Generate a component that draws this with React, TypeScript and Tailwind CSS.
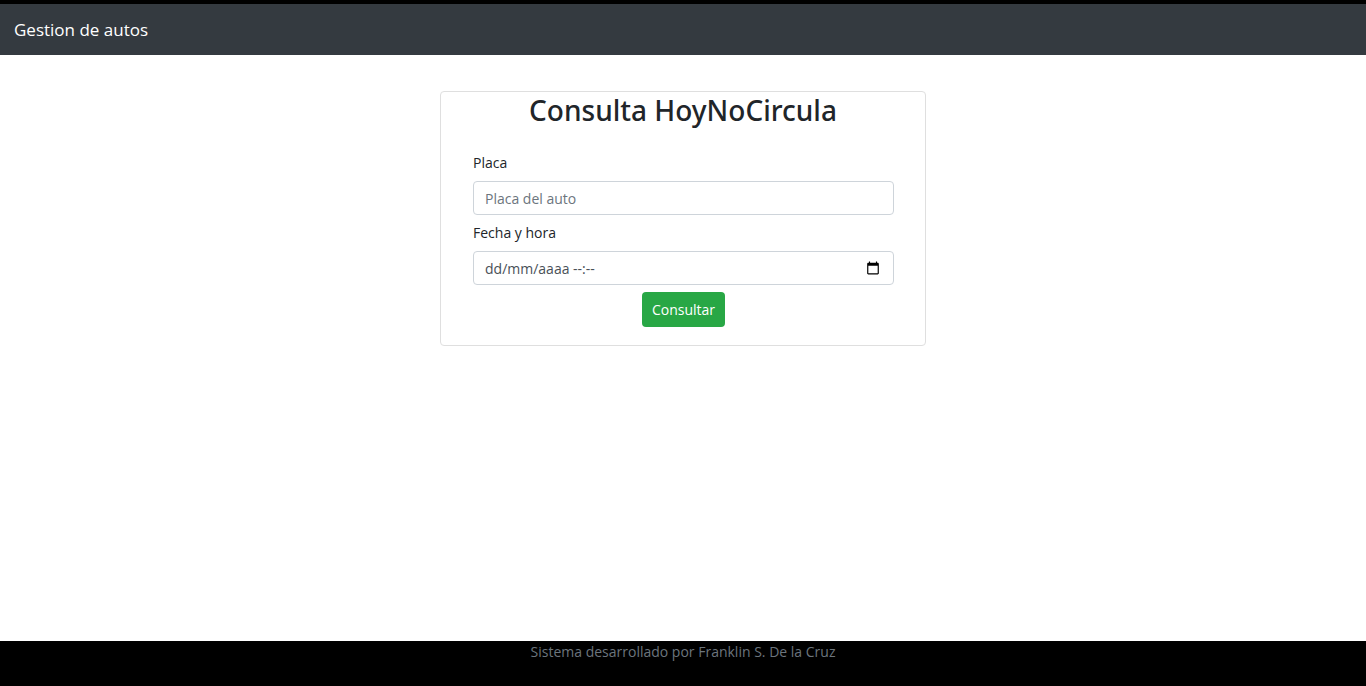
import { useRef } from "react";

const fieldClass =
  "block h-[34px] w-full rounded-[4px] border border-[#ced4da] bg-white px-[11px] text-sm text-[#495057] outline-none placeholder:opacity-100 focus:border-[#80bdff]";

function CalendarIcon() {
  return (
    <svg viewBox="0 0 24 24" className="h-[14px] w-[14px]" fill="#000" aria-hidden="true">
      <path d="M20 3h-1V1h-2v2H7V1H5v2H4c-1.100 0-2 .9-2 2v16c0 1.100.9 2 2 2h16c1.100 0 2-.9 2-2V5c0-1.100-.9-2-2-2zm0 18H4V8h16v13z" />
    </svg>
  );
}

export default function App() {
  const dateRef = useRef<HTMLInputElement>(null);

  return (
    <div className="flex min-h-screen flex-col bg-white font-['Open_Sans','Noto_Sans',sans-serif] text-sm text-[#212529]">
      <header className="border-t-4 border-black bg-[#343a40] px-[14px] py-3">
        <a href="#" className="block text-[17px] leading-[27px] text-white">
          Gestion de autos
        </a>
      </header>

      <main className="flex grow flex-col items-center px-4 pt-9">
        <section className="w-full max-w-[486px] rounded-[4px] border border-[#dfdfdf]">
          <h1 className="text-center font-['Noto_Sans',sans-serif] text-[28px] leading-[36px] font-medium">
            Consulta HoyNoCircula
          </h1>
          <form className="pt-6 pr-[31px] pb-[18px] pl-8" onSubmit={(event) => event.preventDefault()}>
            <label htmlFor="placa" className="block pb-2 leading-[21px]">
              Placa
            </label>
            <input
              id="placa"
              type="text"
              placeholder="Placa del auto"
              className={`${fieldClass} placeholder:text-[#6c757d]`}
            />
            <label htmlFor="fecha" className="block pt-[7px] pb-2 leading-[21px]">
              Fecha y hora
            </label>
            <div className="relative">
              <input
                id="fecha"
                ref={dateRef}
                type="text"
                placeholder="dd/mm/aaaa --:--"
                className={`${fieldClass} placeholder:text-[#495057]`}
              />
              <button
                type="button"
                aria-label="Elegir fecha y hora"
                onClick={() => dateRef.current?.focus()}
                className="absolute inset-y-0 right-[14px] flex items-center"
              >
                <CalendarIcon />
              </button>
            </div>
            <div className="flex justify-center pt-[7px]">
              <button
                type="submit"
                className="h-[35px] rounded-[4px] bg-[#28a745] px-[10px] text-sm text-white"
              >
                Consultar
              </button>
            </div>
          </form>
        </section>
      </main>

      <footer className="h-[45px] bg-black text-center leading-[22px] text-[#6c757d]">
        Sistema desarrollado por Franklin S. De la Cruz
      </footer>
    </div>
  );
}
